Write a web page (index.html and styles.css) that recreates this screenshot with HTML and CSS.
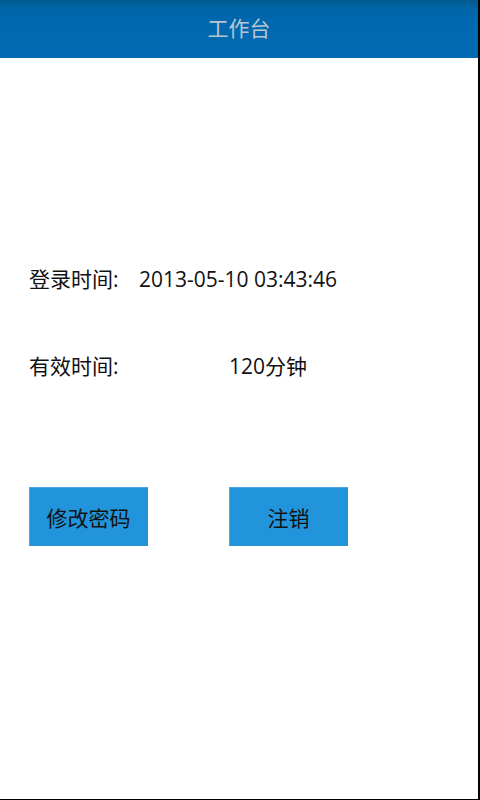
FILE: index.html
```html
<!DOCTYPE html>
<html lang="zh-CN">
<head>
<meta charset="utf-8">
<title>工作台</title>
<link rel="stylesheet" href="styles.css">
</head>
<body>
<div class="screen">
  <header class="titlebar">工作台</header>
  <main class="content">
    <div class="row row-login">
      <span class="label label-short">登录时间:</span>
      <span class="value">2013-05-10 03:43:46</span>
    </div>
    <div class="row row-valid">
      <span class="label label-long">有效时间:</span>
      <span class="value">120分钟</span>
    </div>
    <div class="actions">
      <button class="btn">修改密码</button>
      <button class="btn">注销</button>
    </div>
  </main>
</div>
</body>
</html>
```
FILE: styles.css
```css
html, body {
  margin: 0;
  padding: 0;
  background: #000;
}
body {
  width: 480px;
  height: 800px;
  overflow: hidden;
  font-family: "Open Sans", "Noto Sans CJK SC", sans-serif;
}
.screen {
  width: 478px;
  height: 799px;
  background: #fff;
  display: flex;
  flex-direction: column;
}
.titlebar {
  height: 58px;
  flex: none;
  background: linear-gradient(to bottom, #005a8e 0px, #0064a6 8px, #0068ae 20px, #006ab2 58px);
  color: #bcc6cf;
  font-size: 21px;
  line-height: 57px;
  text-align: center;
}
.content {
  display: flex;
  flex-direction: column;
  padding: 206px 0 0 29px;
}
.row {
  display: flex;
  align-items: center;
  height: 30px;
  font-size: 21px;
  color: #111;
  line-height: 30px;
}
.row-valid {
  margin-top: 57px;
}
.label-short {
  width: 110px;
  flex: none;
}
.label-long {
  width: 200px;
  flex: none;
}
.actions {
  display: flex;
  gap: 81px;
  margin-top: 106px;
}
.btn {
  width: 119px;
  height: 59px;
  margin: 0;
  padding: 0;
  box-sizing: border-box;
  background: #2194dc;
  border: 1px solid #4aa6e4;
  border-right-color: #2a8fd0;
  border-bottom-color: #2a8fd0;
  border-radius: 0;
  color: #111;
  font-family: "Open Sans", "Noto Sans CJK SC", sans-serif;
  font-size: 21px;
}
```
